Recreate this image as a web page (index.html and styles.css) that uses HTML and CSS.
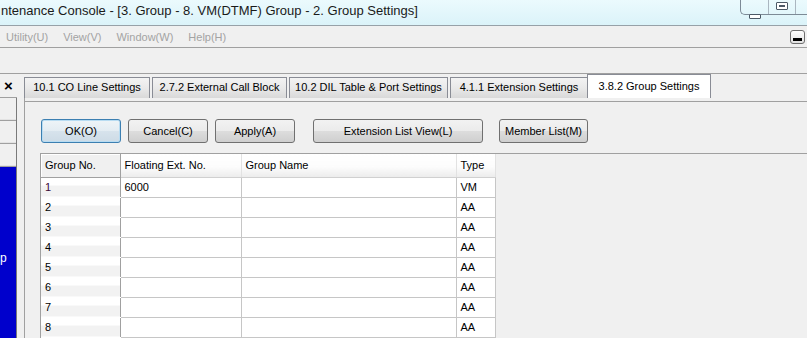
FILE: index.html
```html
<!DOCTYPE html>
<html lang="en">
<head>
    <meta charset="UTF-8">
    <title>Maintenance Console - Group Settings</title>
    <link rel="stylesheet" href="styles.css">
</head>
<body>
    <div class="titlebar">
        <span class="title">ntenance Console - [3. Group - 8. VM(DTMF) Group - 2. Group Settings]</span>
        <div class="caption-btns">
            <span class="cap cap-min"><i></i></span>
            <span class="cap cap-max"><i></i></span>
            <span class="cap cap-close"></span>
        </div>
    </div>

    <div class="menubar">
        <span class="menu-item">Utility(U)</span>
        <span class="menu-item">View(V)</span>
        <span class="menu-item">Window(W)</span>
        <span class="menu-item">Help(H)</span>
        <span class="mdi-min"><i></i></span>
    </div>

    <div class="toolbar"></div>

    <div class="workspace">
        <!-- left navigation pane (scrolled, only the edge is visible) -->
        <aside class="sidepane">
            <div class="side-close">&times;</div>
            <div class="side-list">
                <div class="side-item"></div>
                <div class="side-item"></div>
                <div class="side-item"></div>
                <div class="side-sel">p</div>
            </div>
        </aside>

        <main class="content">
            <div class="tabs">
                <div class="tab w1">10.1 CO Line Settings</div>
                <div class="tab w2">2.7.2 External Call Block</div>
                <div class="tab w3">10.2 DIL Table &amp; Port Settings</div>
                <div class="tab w4">4.1.1 Extension Settings</div>
                <div class="tab active">3.8.2 Group Settings</div>
            </div>

            <div class="tab-panel">
                <div class="panel-body">
                    <div class="actions">
                        <button class="btn btn-focus">OK(O)</button>
                        <button class="btn">Cancel(C)</button>
                        <button class="btn btn-apply">Apply(A)</button>
                        <button class="btn btn-wide">Extension List View(L)</button>
                        <button class="btn btn-member">Member List(M)</button>
                    </div>

                    <div class="grid-wrap">
                        <table class="grid">
                            <colgroup>
                                <col class="c-no">
                                <col class="c-ext">
                                <col class="c-name">
                                <col class="c-type">
                            </colgroup>
                            <thead>
                                <tr>
                                    <th class="corner">Group No.</th>
                                    <th>Floating Ext. No.</th>
                                    <th>Group Name</th>
                                    <th>Type</th>
                                </tr>
                            </thead>
                            <tbody>
                                <tr><td class="rowhead sel">1</td><td>6000</td><td></td><td>VM</td></tr>
                                <tr><td class="rowhead">2</td><td></td><td></td><td>AA</td></tr>
                                <tr><td class="rowhead">3</td><td></td><td></td><td>AA</td></tr>
                                <tr><td class="rowhead">4</td><td></td><td></td><td>AA</td></tr>
                                <tr><td class="rowhead">5</td><td></td><td></td><td>AA</td></tr>
                                <tr><td class="rowhead">6</td><td></td><td></td><td>AA</td></tr>
                                <tr><td class="rowhead">7</td><td></td><td></td><td>AA</td></tr>
                                <tr><td class="rowhead">8</td><td></td><td></td><td>AA</td></tr>
                            </tbody>
                        </table>
                    </div>
                </div>
            </div>
        </main>
    </div>
</body>
</html>
```

FILE: styles.css
```css
* {
    box-sizing: border-box;
}

body {
    margin: 0;
    width: 807px;
    height: 338px;
    overflow: hidden;
    background: #f0f0f0;
    font-family: "Liberation Sans", Arial, sans-serif;
    font-size: 11px;
    color: #000;
}

/* title bar */
.titlebar {
    display: flex;
    height: 26px;
    background: linear-gradient(#ebfafd, #dbf3f9);
    border-bottom: 1px solid #97a1a8;
}

.title {
    flex: 1;
    padding: 3px 0 0 1px;
    font-size: 13px;
    line-height: 16px;
    color: #1a1a1a;
    white-space: nowrap;
}

.caption-btns {
    display: flex;
    width: 67px;
    height: 15px;
    border-left: 1px solid #7d8a96;
    border-bottom: 1px solid #7d8a96;
    border-bottom-left-radius: 5px;
}

.cap {
    border-right: 1px solid #aab6c0;
}

.cap-min {
    width: 28px;
}

.cap-min i {
    display: block;
    width: 12px;
    height: 5px;
    margin: 14px 0 0 8px;
    border: 1px solid #4c5966;
    border-radius: 1px;
    background: #fff;
}

.cap-max {
    width: 27px;
}

.cap-max i {
    display: block;
    width: 12px;
    height: 8px;
    margin: 2px 0 0 7px;
    border: 1px solid #4c5966;
    border-radius: 1px;
    background: #fff;
    box-shadow: inset 0 0 0 2px #fff, inset 0 0 0 3px #4c5966;
}

.cap-close {
    flex: 1;
    border-right: none;
}

/* menu & toolbar */
.menubar {
    display: flex;
    align-items: center;
    height: 22px;
    padding-left: 6px;
    border-bottom: 1px solid #a0a0a0;
}

.menu-item {
    margin-right: 15px;
    color: #a3a3a3;
}

.mdi-min {
    margin-left: auto;
    margin-right: 2px;
    width: 15px;
    height: 14px;
    border: 1px solid #6f6f6f;
    border-radius: 3px;
    background: linear-gradient(#fdfdfd, #e2e2e2);
}

.mdi-min i {
    display: block;
    width: 9px;
    height: 3px;
    margin: 7px 0 0 2px;
    background: #000;
}

.toolbar {
    height: 26px;
    border-bottom: 1px solid #a0a0a0;
}

/* workspace */
.workspace {
    display: flex;
    height: 264px;
}

.sidepane {
    width: 17px;
    display: flex;
    flex-direction: column;
}

.side-close {
    height: 24px;
    padding-top: 4px;
    text-align: center;
    font-size: 15px;
    font-weight: bold;
    line-height: 15px;
    border-bottom: 1px solid #a0a0a0;
}

.side-list {
    flex: 1;
    display: flex;
    flex-direction: column;
    border-right: 1px solid #7a7a7a;
}

.side-item {
    height: 23px;
    border-bottom: 1px solid #a0a0a0;
    box-shadow: inset 0 -1px 0 #e3e3e3;
}

.side-sel {
    flex: 1;
    display: flex;
    align-items: center;
    background: #0000cc;
    color: #fff;
    font-size: 12px;
    padding-top: 10px;
}

.content {
    flex: 1;
    margin-left: 7px;
    display: flex;
    flex-direction: column;
}

/* tabs */
.tabs {
    display: flex;
    align-items: flex-end;
    height: 24px;
}

.tab {
    height: 21px;
    line-height: 19px;
    margin-right: 2px;
    text-align: center;
    white-space: nowrap;
    border: 1px solid #898c95;
    border-bottom: none;
    background: linear-gradient(#f3f3f3, #e9e9e9 50%, #d9d9d9);
}

.tab.w1 { width: 126px; }
.tab.w2 { width: 135px; }
.tab.w3 { width: 159px; }
.tab.w4 { width: 138px; }

.tab.active {
    width: 124px;
    height: 24px;
    line-height: 22px;
    margin-left: -3px;
    background: #fff;
}

.tab-panel {
    flex: 1;
    padding-top: 3px;
    border-left: 1px solid #a0a0a0;
    display: flex;
    flex-direction: column;
}

.panel-body {
    flex: 1;
    border-top: 1px solid #a0a0a0;
    padding: 17px 0 0 16px;
}

/* buttons */
.actions {
    display: flex;
    height: 24px;
}

.btn {
    width: 80px;
    height: 24px;
    margin-right: 7px;
    padding: 0;
    font-family: inherit;
    font-size: 11px;
    color: #000;
    border: 1px solid #707070;
    border-radius: 3px;
    background: linear-gradient(#f2f2f2, #ebebeb 50%, #dddddd 50%, #cfcfcf);
}

.btn-focus {
    border-color: #3c7fb1;
    background: linear-gradient(#eef4f8, #e3ecf2 50%, #d7e3ec 50%, #cddbe6);
    box-shadow: inset 0 0 0 1px #b8dcf2;
}

.btn-apply {
    margin-right: 18px;
}

.btn-wide {
    width: 170px;
    margin-right: 16px;
}

.btn-member {
    width: 89px;
}

/* grid */
.grid-wrap {
    margin: 10px 0 0 -1px;
    height: 200px;
    border-top: 1px solid #a0a0a0;
    border-left: 1px solid #a0a0a0;
    background: #f0f0f0;
}

.grid {
    border-collapse: collapse;
    table-layout: fixed;
    width: 454px;
}

.c-no { width: 79px; }
.c-ext { width: 121px; }
.c-name { width: 215px; }
.c-type { width: 39px; }

.grid th {
    height: 23px;
    padding: 0 0 0 4px;
    text-align: left;
    font-weight: normal;
    background: linear-gradient(#ffffff, #fcfcfc 55%, #ececec);
    border-right: 1px solid #e2e2e2;
    border-bottom: 1px solid #d0d0d0;
    white-space: nowrap;
}

.grid th.corner {
    background: #f0f0f0;
    border-right: 1px solid #a0a0a0;
    border-bottom: 1px solid #a0a0a0;
    box-shadow: inset 1px 1px 0 #fff;
}

.grid td {
    height: 20px;
    padding: 0 0 0 4px;
    background: #fff;
    border-right: 1px solid #c6c6c6;
    border-bottom: 1px solid #c6c6c6;
    white-space: nowrap;
}

.grid td.rowhead {
    background: linear-gradient(#fff 42%, #f2f2f2 42%);
    border-right: 1px solid #a0a0a0;
    border-bottom: 1px solid #fff;
}

.grid td.sel {
    color: #3a0838;
}
```
